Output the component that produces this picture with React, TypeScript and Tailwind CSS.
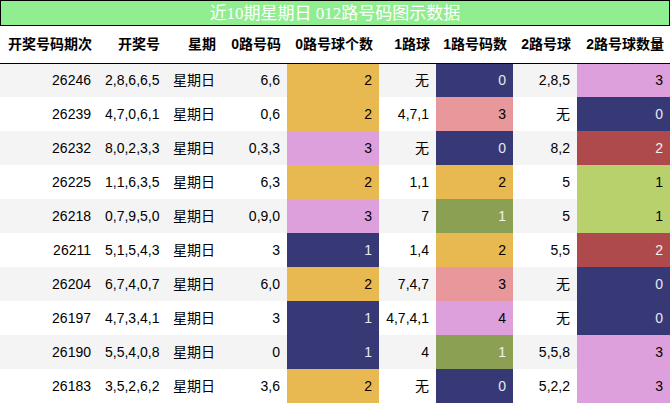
const rows: [string, string, string, number, string, number, string, number][] = [
  ['26246', '2,8,6,6,5', '6,6', 2, '无', 0, '2,8,5', 3],
  ['26239', '4,7,0,6,1', '0,6', 2, '4,7,1', 3, '无', 0],
  ['26232', '8,0,2,3,3', '0,3,3', 3, '无', 0, '8,2', 2],
  ['26225', '1,1,6,3,5', '6,3', 2, '1,1', 2, '5', 1],
  ['26218', '0,7,9,5,0', '0,9,0', 3, '7', 1, '5', 1],
  ['26211', '5,1,5,4,3', '3', 1, '1,4', 2, '5,5', 2],
  ['26204', '6,7,4,0,7', '6,0', 2, '7,4,7', 3, '无', 0],
  ['26197', '4,7,3,4,1', '3', 1, '4,7,4,1', 4, '无', 0],
  ['26190', '5,5,4,0,8', '0', 1, '4', 1, '5,5,8', 3],
  ['26183', '3,5,2,6,2', '3,6', 2, '无', 0, '5,2,2', 3],
]

const navy = 'bg-[#373977] text-[#e8e8f0]'
const yellow = 'bg-[#e8b951] text-black'
const plum = 'bg-[#dda0dd] text-black'
const pink = 'bg-[#e8979b] text-black'
const olive = 'bg-[#8ba052] text-[#f2f2f2]'
const red = 'bg-[#ae4a4c] text-[#f2f2f2]'
const lime = 'bg-[#b8d16d] text-black'

const zeroColors: Record<number, string> = { 1: navy, 2: yellow, 3: plum }
const oneColors: Record<number, string> = { 0: navy, 1: olive, 2: yellow, 3: pink, 4: plum }
const twoColors: Record<number, string> = { 0: navy, 1: lime, 2: red, 3: plum }

const headers = ['开奖号码期次', '开奖号', '星期', '0路号码', '0路号球个数', '1路球', '1路号码数', '2路号球', '2路号球数量']
const widths = ['w-[98px]', 'w-[68px]', 'w-[56px]', 'w-[65px]', 'w-[92px]', 'w-[57px]', 'w-[77px]', 'w-[64px]', 'w-[93px]']

export default function App() {
  return (
    <div className="w-[670px] bg-white font-['Liberation_Sans','Noto_Sans_CJK_SC',sans-serif] text-[14px] text-black">
      <div className="flex h-[26px] items-center justify-center border border-black bg-[#90ee90] font-['Liberation_Serif','Noto_Sans_CJK_SC',serif] text-[17px] leading-none text-white">
        近10期星期日 012路号码图示数据
      </div>
      <table className="w-[670px] table-fixed border-collapse whitespace-nowrap">
        <colgroup>
          {widths.map((w, i) => (
            <col key={i} className={w} />
          ))}
        </colgroup>
        <thead>
          <tr className="h-[37px] border-b border-black">
            {headers.map((h) => (
              <th key={h} className="px-[6px] text-right font-bold">
                {h}
              </th>
            ))}
          </tr>
        </thead>
        <tbody>
          {rows.map((r, i) => (
            <tr key={r[0]} className={`h-[34px] ${i % 2 === 0 ? 'bg-[#f4f4f4]' : 'bg-white'}`}>
              <td className="px-[7px] text-right">{r[0]}</td>
              <td className="px-[7px] text-right">{r[1]}</td>
              <td className="px-[7px] text-right">星期日</td>
              <td className="px-[7px] text-right">{r[2]}</td>
              <td className={`px-[7px] text-right ${zeroColors[r[3]]}`}>{r[3]}</td>
              <td className="px-[7px] text-right">{r[4]}</td>
              <td className={`px-[7px] text-right ${oneColors[r[5]]}`}>{r[5]}</td>
              <td className="px-[7px] text-right">{r[6]}</td>
              <td className={`px-[7px] text-right ${twoColors[r[7]]}`}>{r[7]}</td>
            </tr>
          ))}
        </tbody>
      </table>
    </div>
  )
}
